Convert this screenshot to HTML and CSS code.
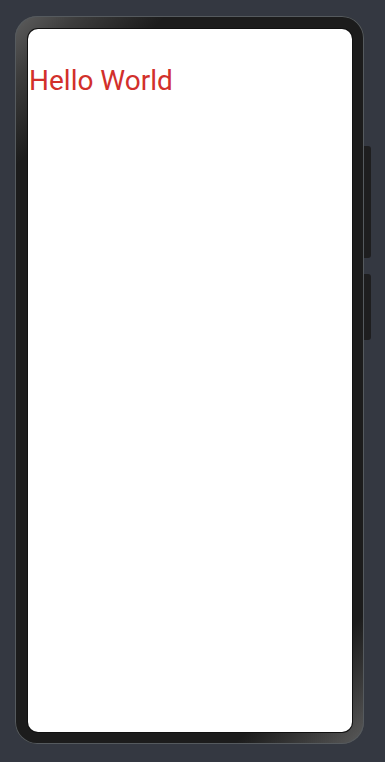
FILE: index.html
```html
<!DOCTYPE html>
<html lang="en">
<head>
<meta charset="utf-8">
<title>Hello World</title>
<link rel="stylesheet" href="styles.css">
</head>
<body>
<div class="stage">
  <div class="phone">
    <span class="btn btn-vol"></span>
    <span class="btn btn-power"></span>
    <div class="screen">
      <p class="hello">Hello World</p>
    </div>
  </div>
</div>
</body>
</html>
```

FILE: styles.css
```css
html, body {
  margin: 0;
  padding: 0;
  background: #343841;
  width: 385px;
  height: 762px;
  overflow: hidden;
}
.stage {
  padding: 16px 0 0 15px;
}
.phone {
  position: relative;
  box-sizing: border-box;
  width: 349px;
  height: 728px;
  padding: 13px 12px 12px 13px;
  border-radius: 22px;
  background:
    linear-gradient(135deg, #5e5e5e 0%, #3c3c3c 6%, #1c1c1c 14%, #1c1c1c 88%, #3a3a3a 94%, #5a5a5a 100%);
  box-shadow: inset 0 0 0 1px #555a5e;
}
.btn {
  position: absolute;
  right: -7px;
  width: 7px;
  background: #1e1e1f;
  border-radius: 0 3px 3px 0;
}
.btn-vol {
  top: 130px;
  height: 112px;
}
.btn-power {
  top: 258px;
  height: 66px;
}
.screen {
  box-sizing: border-box;
  width: 324px;
  height: 703px;
  background: #ffffff;
  border-radius: 10px;
  box-shadow: 0 0 0 1px #111;
  overflow: hidden;
  padding-top: 35px;
}
.hello {
  margin: 0;
  padding-left: 1px;
  font-family: Roboto, "Noto Sans", sans-serif;
  font-size: 28px;
  line-height: 33px;
  color: #d2302b;
}
```
